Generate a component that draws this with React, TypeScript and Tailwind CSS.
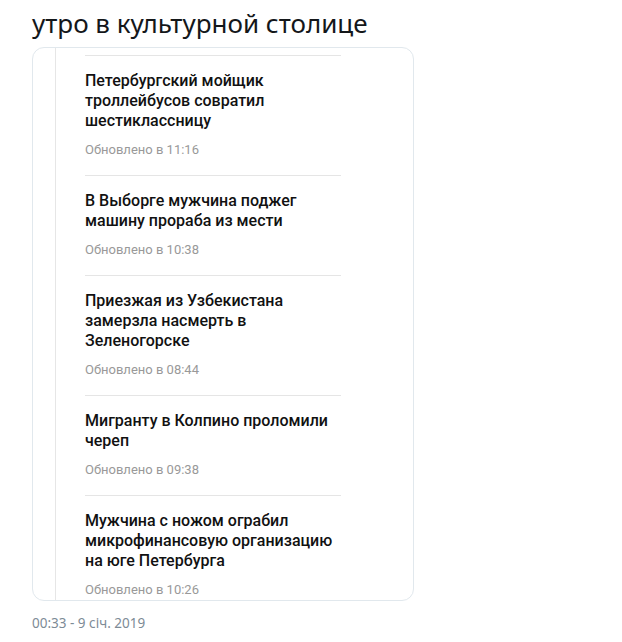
import React from "react";

const items = [
  { title: "Петербургский мойщик троллейбусов совратил шестиклассницу", time: "11:16" },
  { title: "В Выборге мужчина поджег машину прораба из мести", time: "10:38" },
  { title: "Приезжая из Узбекистана замерзла насмерть в Зеленогорске", time: "08:44" },
  { title: "Мигранту в Колпино проломили череп", time: "09:38" },
  { title: "Мужчина с ножом ограбил микрофинансовую организацию на юге Петербурга", time: "10:26" },
];

export default function App() {
  return (
    <div className="w-[622px] h-[642px] bg-white pl-8 pt-[7px] overflow-hidden">
      <div
        className="text-[26px] leading-[32px] text-[#14171a] h-[40px]"
        style={{ fontFamily: '"Noto Sans", "Open Sans", sans-serif' }}
      >
        утро в культурной столице
      </div>
      <div className="w-[382px] h-[554px] border border-[#e1e8ed] rounded-[12px] overflow-hidden pl-[22px]">
        <div className="h-full border-l border-[#e6e6e6] pl-[29px] pt-[7px]">
          {items.map((it, i) => (
            <div key={i} className="w-[256px] border-t border-[#e5e5e5] pt-[15px] pb-[16px]">
              <div
                className="text-[16px] leading-[20px] font-medium text-[#111]"
                style={{ fontFamily: 'Roboto, "Noto Sans", sans-serif' }}
              >
                {it.title}
              </div>
              <div
                className="mt-[10px] text-[13px] leading-[18px] text-[#999999]"
                style={{ fontFamily: 'Roboto, "Noto Sans", sans-serif' }}
              >
                Обновлено в {it.time}
              </div>
            </div>
          ))}
        </div>
      </div>
      <div
        className="mt-[13px] text-[13.5px] leading-[18px] text-[#7d8b96]"
        style={{ fontFamily: '"Noto Sans", "Open Sans", sans-serif' }}
      >
        00:33 - 9 січ. 2019
      </div>
    </div>
  );
}
